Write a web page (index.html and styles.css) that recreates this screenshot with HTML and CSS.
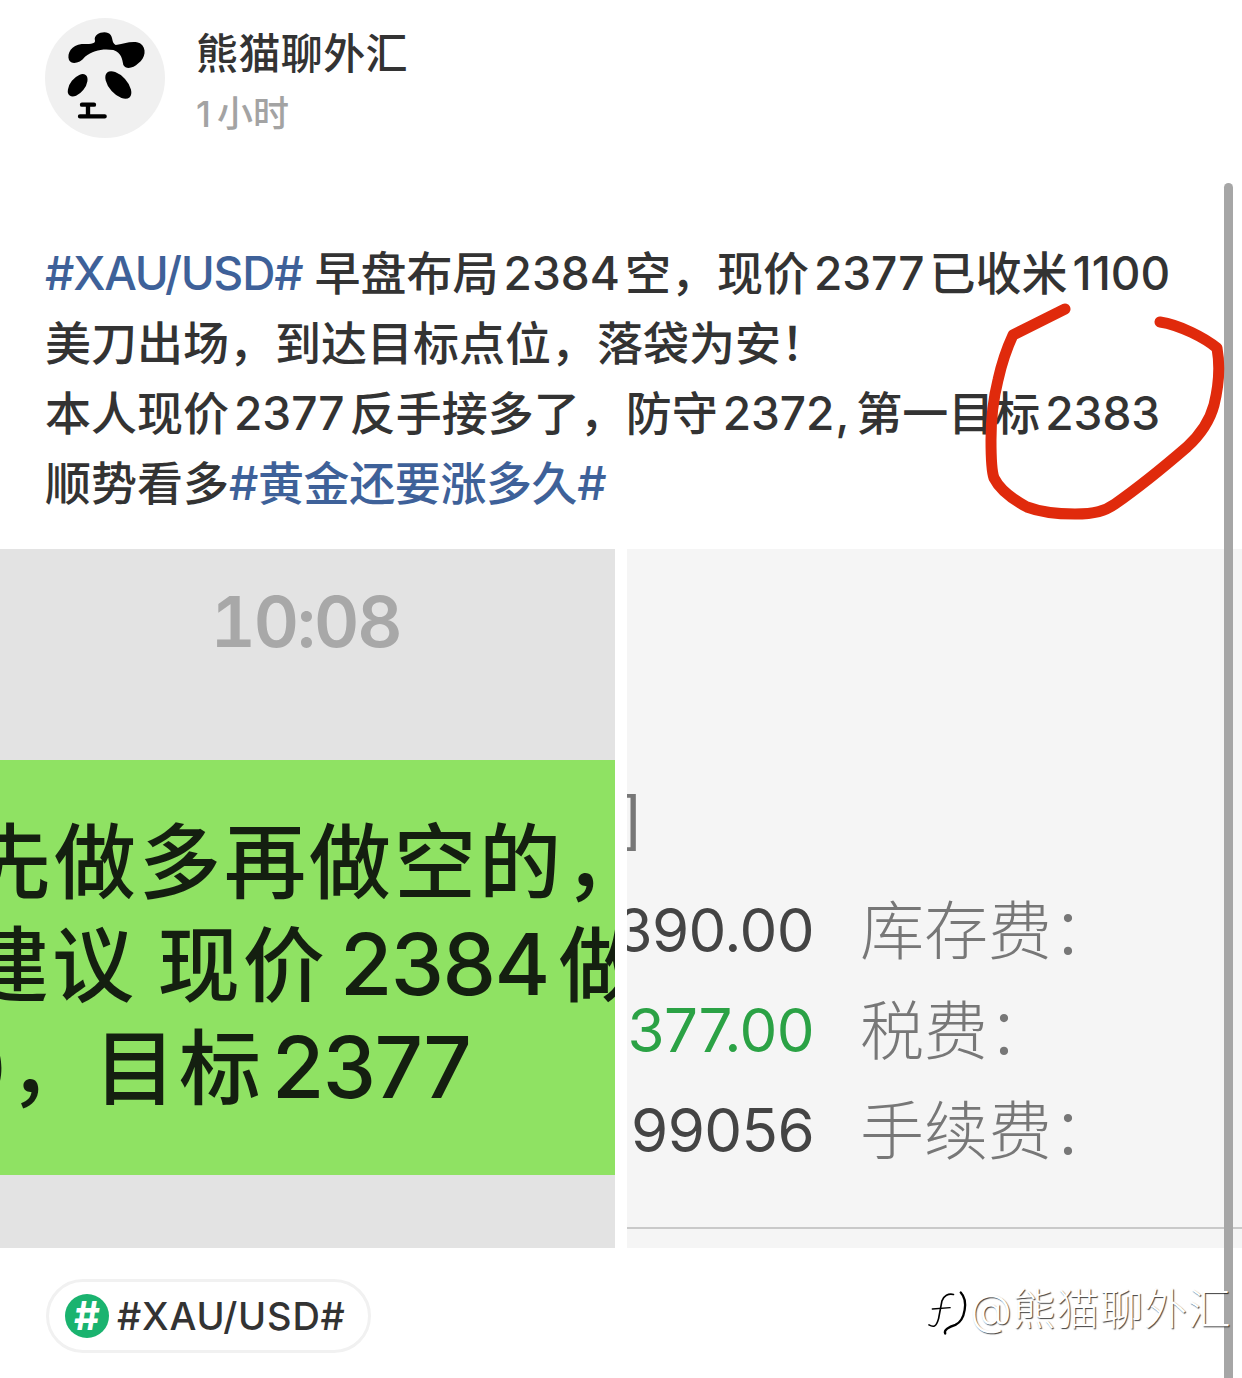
FILE: index.html
```html
<!DOCTYPE html>
<html lang="en">
<head>
  <meta charset="UTF-8">
  <meta name="viewport" content="width=device-width, initial-scale=1.0">
  <title>熊猫聊外汇</title>
  <link rel="stylesheet" href="styles.css">
</head>
<body>

<div id="post">
  <div class="author">
    <svg class="avatar" viewBox="135 54 360 360">
      <circle cx="315" cy="234" r="180" fill="#f0f0f0"/>
      <path d="M285 122C278 100 320 88 332 105C340 118 335 128 347 135C370 132 400 120 420 130C442 145 436 175 415 190C400 205 378 210 370 195C366 175 365 160 340 150C310 145 280 150 255 170C240 190 215 195 207 180C200 160 215 135 245 132C265 132 287 132 285 122Z"/>
      <ellipse cx="233" cy="256" rx="22" ry="39" transform="rotate(38 233 256)"/>
      <ellipse cx="355" cy="255" rx="27" ry="50" transform="rotate(-42 355 255)"/>
      <path d="M246 314H282M264 316V346M240 349H314" fill="none" stroke="#000" stroke-width="13" stroke-linecap="round"/>
    </svg>
    <div class="author-info">
      <div class="author-name">熊猫聊外汇</div>
      <div class="post-time">1<span class="time-unit">小时</span></div>
    </div>
  </div>

  <div class="post-text">
    <a class="topic latin">#XAU/USD#</a> 早盘布局<span class="num">2384</span>空，现价<span class="num">2377</span>已收米<span class="num">1100</span><br>
    美刀出场，到达目标点位，落袋为安！<br>
    本人现价<span class="num">2377</span>反手接多了，防守<span class="num">2372</span><span class="tight">, </span>第一目标<span class="num">2383</span><br>
    顺势看多<a class="topic">#黄金还要涨多久#</a>
  </div>

  <div class="pictures">
    <div class="picture chat-shot">
      <div class="chat-time">10:08</div>
      <div class="bubble">
        <div class="bubble-line line-one">先做多再做空的，</div>
        <div class="bubble-line line-two">建议 现价<span class="bubble-num">2384</span>做</div>
        <div class="bubble-line line-three">0，目标<span class="bubble-num">2377</span></div>
      </div>
    </div>
    <div class="picture trade-shot">
      <div class="bracket">]</div>
      <div class="trade-row">
        <div class="trade-value"><span>2390.00</span></div>
        <div class="trade-label">库存费：</div>
      </div>
      <div class="trade-row">
        <div class="trade-value green"><span>2377.00</span></div>
        <div class="trade-label">税费：</div>
      </div>
      <div class="trade-row">
        <div class="trade-value"><span>99056</span></div>
        <div class="trade-label">手续费：</div>
      </div>
      <div class="trade-line"></div>
    </div>
  </div>

  <div class="topic-pill">
    <span class="pill-icon">#</span>
    <span class="pill-text">#XAU/USD#</span>
  </div>
</div>

<!-- things lying over the post -->
<div class="scrollbar"></div>

<svg class="red-circle" viewBox="0 0 1242 1378">
  <path d="M1065 309L1013 335C1006 350 1002 362 998 380C993 400 991 420 991 440C991 455 991 470 994 478C1000 490 1012 499 1027 507C1040 512 1057 514 1075 514C1095 514 1105 511 1115 504C1135 490 1165 466 1187 447C1200 435 1210 420 1214 405C1219 385 1220 365 1217 348C1205 338 1180 325 1160 322" fill="none" stroke="#e02a0c" stroke-width="11" stroke-linecap="round" stroke-linejoin="round"/>
</svg>

<div class="watermark">
  <svg class="wm-logo" viewBox="80 150 130 150">
    <g fill="none" stroke="#000" stroke-linecap="round">
      <path d="M182 166C205 190 196 250 166 264C146 270 130 280 135 290" stroke-width="7"/>
      <path d="M86 264C100 272 108 270 115 245L125 192C130 176 145 168 160 172" stroke-width="5"/>
      <path d="M96 216L150 212" stroke-width="4"/>
    </g>
  </svg>
  <span class="wm-text">@熊猫聊外汇</span>
</div>

</body>
</html>
```

FILE: styles.css
```css
html, body {
  margin: 0;
  height: 1378px;
  overflow: hidden;
  background-color: #fff;
}

body {
  font-family: 'Inter', 'Noto Sans CJK SC', sans-serif;
  color: #333;
}

#post {
  width: 1242px;
}

.author {
  display: flex;
  align-items: flex-start;
  padding: 18px 45px 0;
  gap: 31px;
}

.avatar {
  width: 120px;
  height: 120px;
  flex: none;
}

.author-name {
  font-size: 42px;
  font-weight: 500;
  line-height: 50px;
  margin-top: 11px;
  letter-spacing: 0.4px;
}

.post-time {
  font-size: 36px;
  line-height: 44px;
  margin-top: 13px;
  color: #a3a3a3;
  font-weight: 500;
}

.time-unit {
  margin-left: 6px;
}

.post-text {
  margin-top: 100px;
  padding-left: 45px;
  font-size: 46px;
  line-height: 70px;
  font-weight: 500;
  white-space: nowrap;
}

.num {
  margin: 0 5px;
}

.tight {
  margin-left: -4px;
  word-spacing: -5px;
}

.topic {
  color: #3e6199;
  font-weight: 500;
  letter-spacing: -0.4px;
}

.topic.latin {
  letter-spacing: -1.2px;
}

.pictures {
  display: flex;
  gap: 12px;
  margin-top: 31px;
  height: 699px;
}

.picture {
  width: 615px;
  height: 699px;
  overflow: hidden;
  flex: none;
}

.chat-shot {
  background-color: #e3e3e3;
}

.chat-time {
  height: 211px;
  line-height: 146px;
  text-align: center;
  font-size: 70px;
  font-weight: 600;
  font-variant-numeric: tabular-nums;
  letter-spacing: -2px;
  color: #a8a8a8;
  margin-left: -4px;
}

.bubble {
  height: 415px;
  background-color: #8fe263;
  padding-top: 51px;
  box-sizing: border-box;
  color: #141f10;
}

.bubble-line {
  font-size: 82px;
  letter-spacing: 3px;
  line-height: 103px;
  font-weight: 500;
  white-space: nowrap;
}

.line-one {
  margin-left: -31px;
}

.line-two {
  margin-left: -33px;
  word-spacing: -4px;
}

.line-three {
  margin-left: -47px;
}

.bubble-num {
  margin: 0 8px;
  font-size: 85px;
  line-height: 1;
  letter-spacing: -1.5px;
}

.line-two .bubble-num {
  margin: 0 10px 0 12px;
}

.trade-shot {
  background-color: #f5f5f5;
  color: #777;
}

.bracket {
  height: 331px;
  padding-top: 233px;
  box-sizing: border-box;
  font-family: 'Liberation Sans', sans-serif;
  font-size: 62px;
  line-height: 70px;
  margin-left: -4px;
}

.trade-row {
  display: flex;
  height: 100px;
  align-items: center;
  gap: 46px;
}

.trade-value {
  width: 187px;
  display: flex;
  justify-content: flex-end;
  overflow: hidden;
  color: #444;
  flex: none;
  font-size: 60px;
  font-weight: 400;
  letter-spacing: -0.6px;
  white-space: nowrap;
}

.trade-value.green {
  color: #2ba245;
}

.trade-label {
  font-size: 64px;
  line-height: 92px;
  margin-top: 2px;
  font-weight: 300;
  white-space: nowrap;
}

.trade-line {
  margin-top: 47px;
  height: 2px;
  background-color: #c9c9c9;
}

.topic-pill {
  display: inline-flex;
  align-items: center;
  box-sizing: border-box;
  height: 74px;
  width: 325px;
  margin: 31px 0 0 46px;
  padding-left: 16px;
  gap: 8px;
  border: 3px solid #f1f1f1;
  border-radius: 37px;
  font-size: 38px;
  font-weight: 500;
  color: #333;
}

.pill-text {
  letter-spacing: 0.8px;
}

.pill-icon {
  width: 44px;
  height: 44px;
  border-radius: 50%;
  background-color: #1ab36f;
  color: #fff;
  font-size: 40px;
  font-weight: 700;
  line-height: 44px;
  text-align: center;
}

.scrollbar {
  position: absolute;
  left: 1224px;
  top: 183px;
  width: 9px;
  height: 1195px;
  background-color: #a6a6a6;
  border-radius: 5px 5px 0 0;
}

.red-circle {
  position: absolute;
  left: 0;
  top: 0;
  width: 1242px;
  height: 1378px;
  pointer-events: none;
}

.watermark {
  position: absolute;
  left: 927px;
  top: 1277px;
  display: flex;
  align-items: center;
  height: 58px;
}

.wm-logo {
  width: 43px;
  height: 50px;
  margin-top: 12px;
}

.wm-text {
  font-size: 43px;
  font-weight: 300;
  letter-spacing: 0.8px;
  color: #fff;
  white-space: nowrap;
  text-shadow: 1px 1px 1px rgba(0, 0, 0, 0.75);
}
```
